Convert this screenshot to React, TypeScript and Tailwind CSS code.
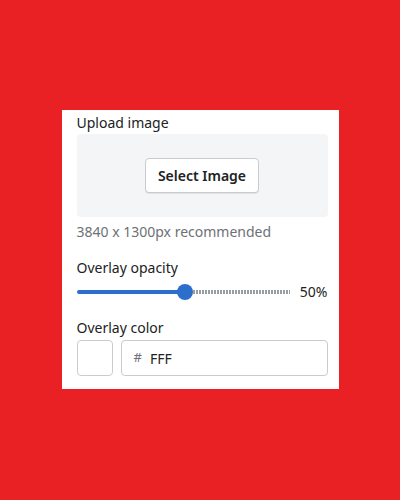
export default function App() {
  return (
    <div className="w-[400px] h-[500px] bg-[#e92124] flex items-center justify-center" style={{ fontFamily: '"Noto Sans", "Open Sans", sans-serif' }}>
      <div className="w-[277px] h-[279px] mb-[1px] bg-white pl-[15px] pr-[11px] pt-[3px] flex flex-col text-[14px] text-[#202223]">
        <div className="leading-[20px]">Upload image</div>
        <div className="mt-[1px] h-[83px] bg-[#f4f5f6] rounded-[4px] flex items-center justify-center">
          <button className="w-[114px] h-[35px] bg-white border border-[#c9cccf] rounded-[4px] shadow-[0_1px_0_rgba(0,0,0,0.08)] font-semibold text-[14px] text-[#202223]">
            Select Image
          </button>
        </div>
        <div className="mt-[5px] leading-[20px] text-[#6d7175]">3840 x 1300px recommended</div>
        <div className="mt-[16px] leading-[20px]">Overlay opacity</div>
        <div className="mt-[4px] h-[20px] flex items-center gap-[10px]">
          <div className="relative flex-1 h-[4px]">
            <div className="absolute left-0 top-0 h-[4px] w-[108px] bg-[#2c6ecb] rounded-l-full" />
            <div className="absolute left-[116px] right-0 top-0 h-[4px] bg-[repeating-linear-gradient(90deg,#999ea3_0_2px,transparent_2px_3px)]" />
            <div className="absolute left-[100px] top-[-6px] w-[16px] h-[16px] rounded-full bg-[#2c6ecb]" />
          </div>
          <div className="leading-[20px]">50%</div>
        </div>
        <div className="mt-[16px] leading-[20px]">Overlay color</div>
        <div className="mt-[2px] flex gap-[8px]">
          <div className="w-[36px] h-[36px] border border-[#c9cccf] rounded-[4px] bg-white" />
          <div className="flex-1 h-[36px] border border-[#c9cccf] rounded-[4px] flex items-center pl-[12px]">
            <span className="text-[#6d7175] text-[13px]">#</span>
            <span className="ml-[8px]">FFF</span>
          </div>
        </div>
      </div>
    </div>
  );
}
